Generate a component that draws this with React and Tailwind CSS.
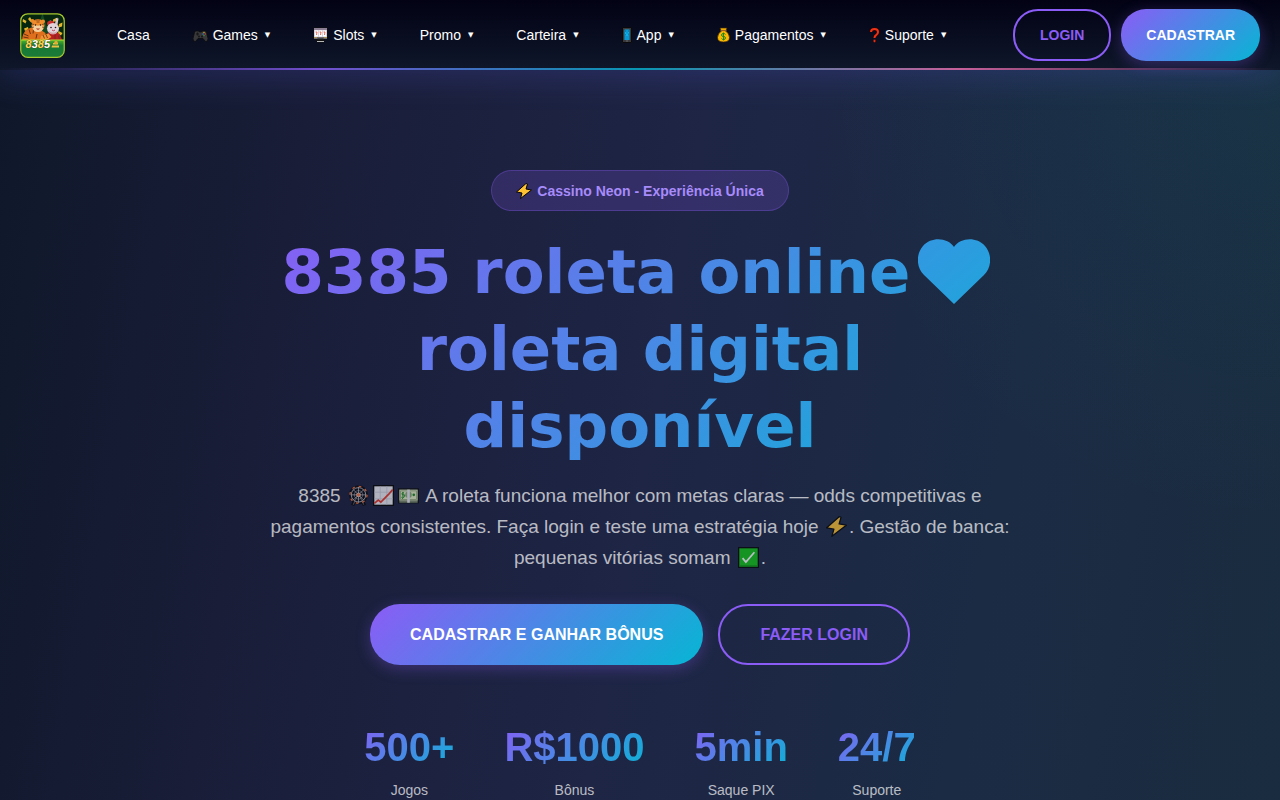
import { useId } from 'react'

function GamepadIcon() {
  return (
    <svg width="15" height="15" viewBox="0 0 30 30" aria-hidden="true">
      <path d="M5 6h6l2 2h4l2-2h6l2 3 3 12-1 5-4 1-5-6H10l-5 6-4-1-1-5L3 9z" fill="#38383b" stroke="#0b0b0c" strokeWidth="1.5" />
      <path d="M9 9v6M6 12h6" stroke="#17171a" strokeWidth="2.4" />
      <circle cx="18" cy="17" r="2" fill="#17171a" />
      <circle cx="12" cy="17" r="2" fill="#17171a" />
      <circle cx="22" cy="9" r="1.3" fill="#e0b51c" />
      <circle cx="25" cy="12" r="1.3" fill="#c9372c" />
      <circle cx="22" cy="15" r="1.3" fill="#38a13f" />
      <circle cx="20" cy="12" r="1.3" fill="#2f7fd6" />
    </svg>
  )
}

function SlotsIcon() {
  return (
    <svg width="15" height="16" viewBox="0 0 30 32" aria-hidden="true">
      <path d="M1 1h28v24h-5l-3 6H9l-3-6H1z" fill="#101010" />
      <path d="M2 2h26v4H2z" fill="#8d7f93" />
      <path d="M2 6h26v14H2z" fill="#d8d3dc" />
      <path d="M4 7h6v12H4zM12 7h6v12h-6zM20 7h6v12h-6z" fill="#fff" />
      <path d="M5 10h3l-1 6M13 10h3l-1 6M21 10h3l-1 6" stroke="#e0452f" strokeWidth="1.6" fill="none" />
      <path d="M2 20h26v4H2z" fill="#6e6a70" />
      <path d="M2 20h6v1H2zM22 20h6v1h-6z" fill="#e3b61f" />
      <path d="M9 23h12v3H9z" fill="#1c1c1c" />
      <path d="M8 28h14v2H8z" fill="#b9b9b9" />
    </svg>
  )
}

function PhoneIcon() {
  return (
    <svg width="10" height="16" viewBox="0 0 20 32" aria-hidden="true">
      <rect x="1" y="1" width="18" height="30" rx="1" fill="#38383c" stroke="#0a0a0b" strokeWidth="2" />
      <rect x="5" y="5" width="10" height="21" fill="#0ab1ec" />
      <path d="M7 6v4M10 6v7M13 6v4M7 14v3M13 13v4M5 20h10M5 24h10" stroke="#055f9c" strokeWidth="1.2" />
      <path d="M8 28h4" stroke="#777" strokeWidth="1.5" />
    </svg>
  )
}

function MoneyBagIcon() {
  return (
    <svg width="13" height="16" viewBox="0 0 26 32" aria-hidden="true">
      <path d="M6 2h14l-2 5h-2q9 6 9 14 0 9-12 9T1 21Q1 13 10 7H8z" fill="#ffb800" stroke="#33230a" strokeWidth="1.4" />
      <path d="M7 7h12" stroke="#9a5d1d" strokeWidth="2.5" />
      <path d="M17 15q-1-2-4-2-4 0-4 3t4 3 4 3-4 3q-3 0-4-2M13 11v16" fill="none" stroke="#178a1e" strokeWidth="2" />
    </svg>
  )
}

function QuestionIcon() {
  return (
    <svg width="11" height="16" viewBox="0 0 22 32" aria-hidden="true">
      <path d="M4 10q0-6 7-6t7 6q0 4-4 6.500-3 1.500-3 5.500" fill="none" stroke="#280603" strokeWidth="6.500" />
      <path d="M4 10q0-6 7-6t7 6q0 4-4 6.500-3 1.500-3 5.500" fill="none" stroke="#ee3218" strokeWidth="4" />
      <circle cx="11" cy="28" r="2.800" fill="#ee3218" stroke="#280603" strokeWidth="1" />
    </svg>
  )
}

function BoltIcon({ className }) {
  return (
    <svg viewBox="0 0 32 32" className={className} aria-hidden="true">
      <path d="M20 1 1 18l11 2-3 11L31 14l-11-2 3-10z" fill="#ffc233" stroke="#050505" strokeWidth="2" strokeLinejoin="round" />
    </svg>
  )
}

function FerrisWheelIcon({ className }) {
  return (
    <svg viewBox="0 0 32 32" className={className} aria-hidden="true">
      <path d="M13 17 7 31M19 17l6 14" stroke="#060606" strokeWidth="5" />
      <circle cx="16" cy="15" r="14.500" fill="#08090d" />
      <path d="M14 17 8 30M18 17l6 13" stroke="#666" strokeWidth="1.5" />
      <circle cx="16" cy="15" r="11" fill="none" stroke="#d8d8de" strokeWidth="1.200" />
      <circle cx="16" cy="15" r="6.500" fill="none" stroke="#a4a7b2" strokeWidth=".9" />
      <path d="M16 3v24M4 15h24M8 7l16 16M24 7 8 23" stroke="#d8d8de" strokeWidth="1" />
      <circle cx="16" cy="15" r="13" fill="none" stroke="#f4733c" strokeWidth="2" strokeDasharray="4 6.200" />
      <circle cx="16" cy="15" r="3" fill="#f4733c" stroke="#fff" strokeWidth=".8" />
    </svg>
  )
}

function ChartIcon({ className }) {
  return (
    <svg viewBox="0 0 32 32" className={className} aria-hidden="true">
      <rect x="1" y="1" width="30" height="30" fill="#f0f0f5" stroke="#050505" strokeWidth="2" />
      <path d="M11 2v28M21 2v28M2 11h28M2 21h28" stroke="#c9ccd8" strokeWidth="1.200" />
      <path d="m2 28 6-5 4 3L24 14l6-7" fill="none" stroke="#e8392a" strokeWidth="2.600" />
    </svg>
  )
}

function BanknoteIcon({ className }) {
  return (
    <svg viewBox="0 0 32 32" className={className} aria-hidden="true">
      <rect x="0" y="5" width="32" height="23" fill="#0a0d0a" />
      <rect x="2" y="7" width="28" height="17" fill="#e0eec0" />
      <path d="M2 24h28v3H2z" fill="#7a8a68" />
      <rect x="4" y="9" width="24" height="13" fill="none" stroke="#8ea56f" strokeWidth="1.200" />
      <circle cx="16" cy="15" r="5" fill="#91aa78" />
      <path d="M14 7h4v20h-4z" fill="#e9e9f2" />
      <path d="M9 12q-3-1-3 1.500T9 15t0 3.500-3-.500M7.500 10.500v9" fill="none" stroke="#1f8a22" strokeWidth="1.500" />
      <circle cx="24" cy="15" r="2" fill="#1f8a22" />
    </svg>
  )
}

function CheckIcon({ className }) {
  return (
    <svg viewBox="0 0 32 32" className={className} aria-hidden="true">
      <rect x="1" y="1" width="30" height="30" fill="#13c316" stroke="#050505" strokeWidth="2" />
      <path d="M2 28h28v2H2z" fill="#0c8a10" />
      <path d="m7 17 5 6L25 8" fill="none" stroke="#fff" strokeWidth="2.600" />
    </svg>
  )
}

function HeartIcon() {
  const id = useId()
  return (
    <svg viewBox="0 0 72 66" className="mx-2 inline-block h-[66px] w-[72px] align-[-12px]" aria-hidden="true">
      <defs>
        <linearGradient id={id} x1="0" y1="0" x2="1" y2="1">
          <stop offset="0" stopColor="#3397e1" />
          <stop offset="1" stopColor="#21a4dc" />
        </linearGradient>
      </defs>
      <path d="M36 65 6 36C-2 28-2 15 5 7 14-3 30-1 36 8 42-1 58-3 67 7c7 8 7 21-1 29z" fill={`url(#${id})`} />
    </svg>
  )
}

function Logo() {
  const id = useId()
  return (
    <svg width="45" height="45" viewBox="0 0 90 90" role="img" aria-label="8385">
      <defs>
        <linearGradient id={id} x1="0" y1="0" x2="0" y2="1">
          <stop offset="0" stopColor="#4fb52c" />
          <stop offset=".3" stopColor="#177a35" />
          <stop offset="1" stopColor="#1c7a38" />
        </linearGradient>
        <clipPath id={`${id}c`}>
          <rect x="2" y="2" width="86" height="86" rx="13" />
        </clipPath>
      </defs>
      <g clipPath={`url(#${id}c)`}>
        <rect width="90" height="90" fill="#05270f" />
        <path d="M45 0 28 54h34z" fill="#124b20" />
        <path d="m6 12 7 4-2 5-6-4zM20 8l4 7-3 3-5-6zM8 31l8-3 1 4-7 4zM66 13l9-4-2 7-7 2zM78 22l7-3-1 8-7 2zM77 36l8 4-3 5-6-4z" fill="#e2b52d" />
        <path d="M14 33q8-6 18-5l19 12-2 15H4q1-16 10-22z" fill="#df6f1c" />
        <path d="m8 42 9 4M7 48l10 2M18 33l3 9M27 33l-1 8M34 42l-2 9" stroke="#5a2a0e" strokeWidth="1.800" />
        <circle cx="25" cy="16" r="4" fill="#ed8a29" />
        <circle cx="46" cy="17" r="4" fill="#ed8a29" />
        <ellipse cx="36" cy="25" rx="13" ry="13" fill="#f08c2c" />
        <path d="M25 27q5-5 11-1 6-4 11 1-1 11-11 11T25 27z" fill="#f3cf9d" />
        <path d="M31 14h9M33 18h6M24 22l4 1M48 22l-4 1M24 29l4-1M48 29l-4-1" stroke="#6b3413" strokeWidth="1.500" />
        <circle cx="31" cy="24" r="1.600" fill="#18100a" />
        <circle cx="41" cy="24" r="1.600" fill="#18100a" />
        <path d="M32 31q4 5 8 0" fill="#a92820" />
        <path d="M55 40q12-8 24 2l6 13H47z" fill="#b51f24" />
        <path d="m70 22 2-12 5 1-2 13zM60 22l-2-6 4-1 4 7z" fill="#d8c6ce" />
        <path d="M54 22q0-8 12-6l4 6-13 5z" fill="#c92a2b" />
        <ellipse cx="66" cy="31" rx="12" ry="11" fill="#e3d3da" />
        <path d="M57 36q9 7 18 0-2 7-9 7t-9-7z" fill="#d5a1a8" />
        <circle cx="62" cy="29" r="1.600" fill="#24151b" />
        <circle cx="71" cy="29" r="1.600" fill="#24151b" />
        <path d="M64 34q3 3 6 0" stroke="#bd4355" strokeWidth="2" fill="none" />
        <path d="m42 46 15-5 6 7-12 8-11-2z" fill="#f09334" />
        <path d="m46 44 3 7M52 43l3 7M70 43v10M77 45l2 8" stroke="#6b2c12" strokeWidth="1.600" />
        <rect y="54" width="90" height="36" fill={`url(#${id})`} />
        <path d="M2 54h86" stroke="#b8df32" strokeWidth="2" />
      </g>
      <rect x="1.500" y="1.500" width="87" height="87" rx="14" fill="none" stroke="#a5c82c" strokeWidth="2.500" />
      <text
        x="11"
        y="70"
        fill="#ffd34f"
        fontFamily="Liberation Sans, Arial, sans-serif"
        fontSize="22"
        fontWeight="700"
        fontStyle="italic"
        stroke="#633b12"
        strokeWidth="1"
        paintOrder="stroke"
      >
        8<tspan fill="#fff">3</tspan>8<tspan fill="#fff">5</tspan>
      </text>
      <path d="M64 65h14v4H63zM66 60h10v3H66z" fill="#f0c040" />
      <circle cx="72" cy="59" r="3.500" fill="#e2ac35" />
    </svg>
  )
}

const navItems = [
  { label: 'Games', icon: GamepadIcon },
  { label: 'Slots', icon: SlotsIcon },
  { label: 'Promo' },
  { label: 'Carteira' },
  { label: 'App', icon: PhoneIcon },
  { label: 'Pagamentos', icon: MoneyBagIcon },
  { label: 'Suporte', icon: QuestionIcon },
]

const stats = [
  { value: '500+', label: 'Jogos' },
  { value: 'R$1000', label: 'Bônus' },
  { value: '5min', label: 'Saque PIX' },
  { value: '24/7', label: 'Suporte' },
]

function Header() {
  return (
    <header className="relative z-10 bg-[linear-gradient(180deg,#020214,#0f172a)] shadow-[0_8px_32px_rgba(79,82,200,0.24)]">
      <div className="flex h-[70px] items-center px-5">
        <a href="#" className="shrink-0">
          <Logo />
        </a>
        <nav className="ml-9 flex items-center gap-[11px] text-sm text-white">
          <a href="#" className="px-4">Casa</a>
          {navItems.map(({ label, icon: Icon }) => (
            <a key={label} href="#" className="flex items-center gap-[5px] px-4">
              {Icon && <Icon />}
              {label}
              <span className="ml-0.5 font-['DejaVu_Sans'] text-[7px]">▼</span>
            </a>
          ))}
        </nav>
        <div className="ml-auto flex gap-[10px] text-sm font-bold">
          <button className="h-[52px] rounded-[25px] border-2 border-[#8b5cf6] px-[25px] text-[#8b5cf6]">LOGIN</button>
          <button className="h-[52px] rounded-[25px] bg-[linear-gradient(135deg,#8b5cf6,#06b6d4)] px-[25px] text-white shadow-[0_4px_15px_rgba(139,92,246,0.3)]">
            CADASTRAR
          </button>
        </div>
      </div>
      <div className="absolute inset-x-0 bottom-0 -z-10 h-0.5 bg-[linear-gradient(90deg,transparent,#8b5cf6,#06b6d4,#f472b6,transparent)] opacity-80" />
    </header>
  )
}

function Hero() {
  return (
    <section className="bg-[radial-gradient(circle_at_100%_0%,rgba(6,182,150,0.06),transparent_30%),linear-gradient(100deg,#0f182a_0%,#191d38_22%,#1e2545_50%,#1b2b44_75%,#1a2c3f_100%)] px-5 py-[100px]">
      <div className="mx-auto flex max-w-[800px] flex-col items-center text-center">
        <div className="flex h-[41px] items-center gap-[5px] rounded-[25px] border border-[#8b5cf6]/30 bg-[#8b5cf6]/20 px-6 text-sm font-bold text-[#a78bfa]">
          <BoltIcon className="size-4" />
          Cassino Neon - Experiência Única
        </div>
        <h1 className="mt-[22px] w-full bg-[linear-gradient(135deg,#8b5cf6,#06b6d4)] bg-clip-text font-['DejaVu_Sans'] text-[61px] leading-[77px] font-bold text-transparent">
          8385 roleta online<HeartIcon />
          <br />
          roleta digital
          <br />
          disponível
        </h1>
        <p className="mt-4 max-w-[760px] text-[19px] leading-[31px] text-white/70">
          8385{' '}
          <FerrisWheelIcon className="mx-0.5 inline-block size-[21px] align-[-4px] opacity-70" />
          <ChartIcon className="mx-0.5 inline-block size-[21px] align-[-4px] opacity-70" />
          <BanknoteIcon className="mx-0.5 inline-block size-[21px] align-[-4px] opacity-70" />
          {' '}A roleta funciona melhor com metas claras — odds competitivas e pagamentos
          consistentes. Faça login e teste uma estratégia hoje{' '}
          <BoltIcon className="mx-0.5 inline-block size-[21px] align-[-4px] opacity-70" />. Gestão de banca:
          pequenas vitórias somam{' '}
          <CheckIcon className="mx-0.5 inline-block size-[21px] align-[-4px] opacity-70" />.
        </p>
        <div className="mt-[31px] flex gap-[15px] font-bold">
          <button className="h-[61px] rounded-[30px] bg-[linear-gradient(135deg,#8b5cf6,#06b6d4)] px-10 text-white shadow-[0_4px_15px_rgba(139,92,246,0.3)]">
            CADASTRAR E GANHAR BÔNUS
          </button>
          <button className="h-[61px] rounded-[30px] border-2 border-[#8b5cf6] px-10 text-[#8b5cf6]">FAZER LOGIN</button>
        </div>
        <div className="mt-[50px] flex gap-[50px]">
          {stats.map((stat) => (
            <div key={stat.label}>
              <div className="bg-[linear-gradient(135deg,#8b5cf6,#06b6d4)] bg-clip-text text-[40px] leading-[64px] font-bold text-transparent">
                {stat.value}
              </div>
              <div className="text-sm leading-[22px] text-white/70">{stat.label}</div>
            </div>
          ))}
        </div>
      </div>
    </section>
  )
}

export default function App() {
  return (
    <div className="min-h-screen bg-[#0f172a] font-['Liberation_Sans',Arial,sans-serif]">
      <Header />
      <Hero />
    </div>
  )
}
